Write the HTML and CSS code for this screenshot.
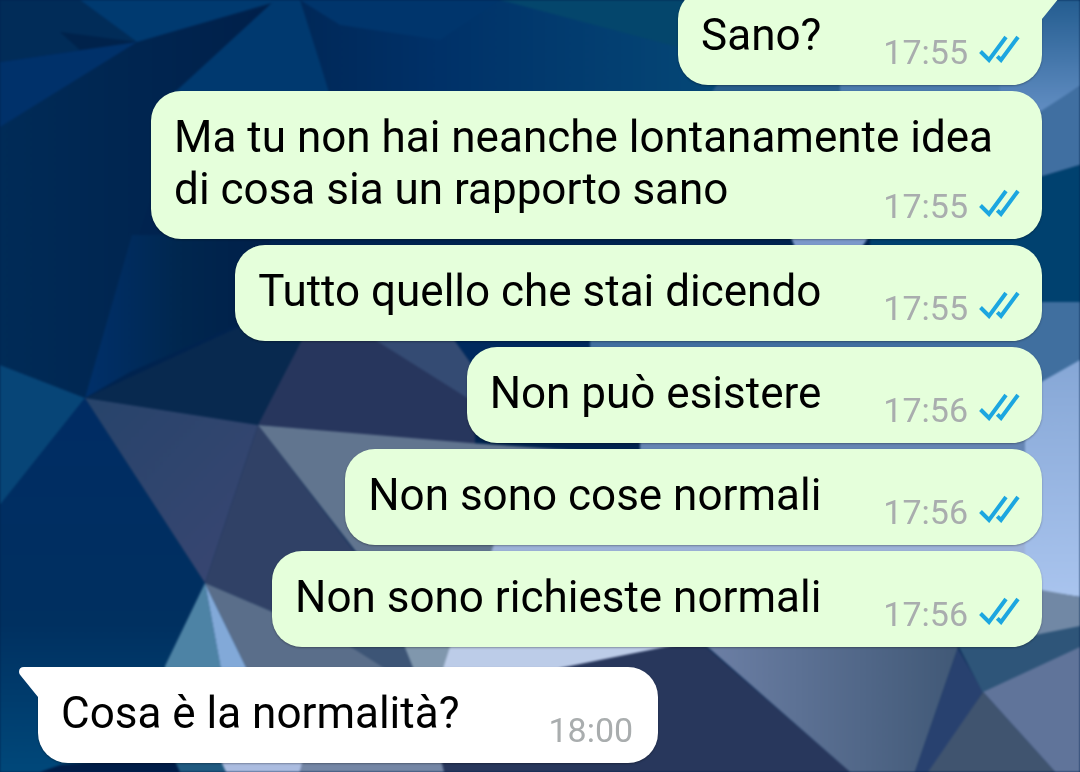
FILE: index.html
```html
<!DOCTYPE html>
<html lang="it">
<head>
  <meta charset="UTF-8">
  <meta name="viewport" content="width=device-width, initial-scale=1.0">
  <title>Chat</title>
  <link rel="stylesheet" href="styles.css">
</head>
<body>
  <!-- low poly wallpaper -->
  <svg class="wallpaper" viewBox="0 0 1080 772" preserveAspectRatio="xMidYMid slice" aria-hidden="true">
    <defs>
      <linearGradient id="top" x1="0" x2="1" y1="0" y2="0">
        <stop offset="0" stop-color="#002858"/>
        <stop offset=".3" stop-color="#003168"/>
        <stop offset="1" stop-color="#064b79"/>
      </linearGradient>
      <linearGradient id="sky" x1="0" x2="0" y1="0" y2="1">
        <stop offset="0" stop-color="#245d90"/>
        <stop offset="1" stop-color="#6691c6"/>
      </linearGradient>
      <linearGradient id="night" x1="0" x2="1" y1="0" y2="0">
        <stop offset="0" stop-color="#002b57"/>
        <stop offset="1" stop-color="#001f49"/>
      </linearGradient>
      <linearGradient id="shade" x1="0" x2="1" y1="0" y2="0">
        <stop offset="0" stop-color="#00306a"/>
        <stop offset=".5" stop-color="#00274f"/>
        <stop offset="1" stop-color="#001f49"/>
      </linearGradient>
      <linearGradient id="deep" x1="0" x2="0" y1="0" y2="1">
        <stop offset="0" stop-color="#002c64"/>
        <stop offset=".6" stop-color="#003060"/>
        <stop offset="1" stop-color="#00487a"/>
      </linearGradient>
      <linearGradient id="slate" x1="0" x2="1" y1="0" y2="1">
        <stop offset="0" stop-color="#27446b"/>
        <stop offset="1" stop-color="#3a4672"/>
      </linearGradient>
      <linearGradient id="grey" x1="0" x2="1" y1="0" y2="0">
        <stop offset="0" stop-color="#6d80a6"/>
        <stop offset="1" stop-color="#405876"/>
      </linearGradient>
      <linearGradient id="ice" x1="0" x2="0" y1="0" y2="1">
        <stop offset="0" stop-color="#86a7d6"/>
        <stop offset="1" stop-color="#a9c4ee"/>
      </linearGradient>
    </defs>
    <rect width="1080" height="772" fill="#00234f"/>
    <polygon points="0,120 137,42 290,0 175,92 160,170 85,398 0,365" fill="url(#night)"/>
    <polygon points="0,0 80,0 137,42 0,62" fill="#012c58"/>
    <polygon points="60,32 137,42 80,50" fill="#00224b"/>
    <polygon points="0,62 137,42 0,127" fill="#00316a"/>
    <polygon points="80,0 282,0 137,42" fill="#003a70"/>
    <polygon points="275,0 302,0 330,95 175,92" fill="#00396f"/>
    <polygon points="300,0 760,0 760,100 330,95" fill="url(#top)"/>
    <polygon points="300,0 500,0 440,40 340,25" fill="#00356c"/>
    <polygon points="500,0 700,0 700,52 670,45" fill="#04466c"/>
    <polygon points="720,80 840,80 840,95 710,95" fill="#285d8b"/>
    <polygon points="840,80 1030,80 1030,95 840,95" fill="#4b7bad"/>
    <polygon points="1000,0 1080,0 1080,86 1030,120 1000,120" fill="url(#sky)"/>
    <polygon points="1080,86 1080,165 1030,180 1030,118" fill="#406fa1"/>
    <polygon points="870,180 1030,180 1080,165 1080,302 870,302" fill="#00416f"/>
    <polygon points="790,235 870,235 860,250 796,250" fill="#7b98ca"/>
    <polygon points="132,235 270,235 270,310 130,372 85,398" fill="url(#shade)"/>
    <polygon points="85,398 258,318 310,335 258,425" fill="#08294f"/>
    <polygon points="0,365 85,398 0,505" fill="#074577"/>
    <polygon points="85,398 205,583 165,666 165,772 0,772 0,505" fill="url(#deep)"/>
    <polygon points="85,398 258,425 205,583" fill="url(#slate)"/>
    <polygon points="258,425 365,565 273,612 205,583" fill="#304166"/>
    <polygon points="303,338 375,338 475,400 475,445 258,425" fill="#27365d"/>
    <polygon points="372,338 453,338 490,390 480,406" fill="#344b73"/>
    <polygon points="453,338 600,338 600,390 490,390" fill="#002a5e"/>
    <polygon points="590,338 1020,338 1020,302 1080,302 1080,362 1030,390 590,390" fill="#406f9f"/>
    <polygon points="1020,394 1080,360 1080,597 1020,588" fill="url(#ice)"/>
    <polygon points="640,438 1025,438 1025,454 640,454" fill="#6585b3"/>
    <polygon points="258,425 470,443 640,455 495,557 360,557" fill="#61758f"/>
    <polygon points="495,540 1025,540 1025,556 490,556" fill="#9db2d8"/>
    <polygon points="1030,588 1080,597 1080,627 1020,640" fill="#7188a5"/>
    <polygon points="205,583 165,666 165,675 222,675" fill="#4d83a5"/>
    <polygon points="205,583 222,675 250,675" fill="#82a9d8"/>
    <polygon points="205,583 273,612 340,640 420,675 250,675" fill="#5a6e8a"/>
    <polygon points="340,640 410,640 420,675 395,675" fill="#3d5576"/>
    <polygon points="402,640 452,640 443,675 416,675" fill="#8097ad"/>
    <polygon points="452,640 700,640 550,675 441,675" fill="#bccce8"/>
    <polygon points="560,668 680,644 705,646 850,772 440,772 440,740" fill="#28375c"/>
    <polygon points="702,642 960,642 915,772 850,772" fill="url(#grey)"/>
    <polygon points="958,648 983,692 930,772 915,772" fill="#28416f"/>
    <polygon points="955,640 1030,636 1080,626 1080,648 983,693" fill="#2e5579"/>
    <polygon points="983,692 1080,647 1080,772 1055,772" fill="#60749a"/>
    <polygon points="983,692 1055,772 928,772" fill="#40546f"/>
    <polygon points="60,765 175,755 180,772 40,772" fill="#001d48"/>
    <polygon points="172,755 220,755 226,772 180,772" fill="#205a80"/>
    <polygon points="218,755 305,755 300,772 226,772" fill="#abbce0"/>
    <polygon points="304,755 440,755 444,772 300,772" fill="#7486a5"/>
  </svg>

  <svg class="defs" aria-hidden="true">
    <symbol id="ticks" viewBox="0 0 41 28">
      <path d="M1.5 16.5 L10 25 L27 2 M18.3 21.3 L22 25 L39 2"/>
    </symbol>
    <symbol id="tail" viewBox="0 0 20 30">
      <path d="M20 0 H5 Q0 0 0 5 Q0 7 2 9 L19 30 H20 Z"/>
    </symbol>
  </svg>

  <main class="chat">
    <div class="bubble out first">
      <svg class="tail"><use href="#tail"/></svg>
      <p>Sano?</p>
      <div class="meta"><time>17:55</time><svg class="ticks"><use href="#ticks"/></svg></div>
    </div>
    <div class="bubble out long">
      <p>Ma tu non hai neanche lontanamente idea<br>di cosa sia un rapporto sano</p>
      <div class="meta"><time>17:55</time><svg class="ticks"><use href="#ticks"/></svg></div>
    </div>
    <div class="bubble out">
      <p>Tutto quello che stai dicendo</p>
      <div class="meta"><time>17:55</time><svg class="ticks"><use href="#ticks"/></svg></div>
    </div>
    <div class="bubble out">
      <p>Non può esistere</p>
      <div class="meta"><time>17:56</time><svg class="ticks"><use href="#ticks"/></svg></div>
    </div>
    <div class="bubble out">
      <p>Non sono cose normali</p>
      <div class="meta"><time>17:56</time><svg class="ticks"><use href="#ticks"/></svg></div>
    </div>
    <div class="bubble out">
      <p>Non sono richieste normali</p>
      <div class="meta"><time>17:56</time><svg class="ticks"><use href="#ticks"/></svg></div>
    </div>
    <div class="bubble in">
      <svg class="tail"><use href="#tail"/></svg>
      <p>Cosa è la normalità?</p>
      <div class="meta"><time>18:00</time></div>
    </div>
  </main>
</body>
</html>
```
FILE: styles.css
```css
* {
  box-sizing: border-box;
}

body {
  margin: 0;
  background: #00234f;
  font-family: Roboto, sans-serif;
  color: #000;
}

.wallpaper {
  position: fixed;
  inset: 0;
  width: 100%;
  height: 100%;
  filter: blur(1px);
}

.defs {
  position: absolute;
  width: 0;
  height: 0;
}

/* newest message stays at the bottom, older ones scroll off the top */
.chat {
  position: relative;
  display: flex;
  flex-direction: column;
  justify-content: flex-end;
  gap: 6px;
  height: 100vh;
  padding: 0 38px 9px;
  overflow: hidden;
}

.bubble {
  position: relative;
  flex-shrink: 0;
  display: flex;
  align-items: flex-end;
  gap: 62px;
  padding: 20px 22px 13px 23px;
  border-radius: 30px;
  box-shadow: 0 1px 2px rgba(0, 0, 0, 0.3);
}

.bubble p {
  margin: 0;
  padding-bottom: 11px;
  font-size: 44px;
  line-height: 52px;
}

.out {
  align-self: flex-end;
  background: #e5ffdb;
}

.first {
  border-top-right-radius: 0;
}

.in {
  align-self: flex-start;
  margin-top: 14px;
  padding-right: 25px;
  gap: 89px;
  background: #fff;
  border-top-left-radius: 0;
}

/* time sits over the end of the last line */
.long {
  display: grid;
}

.long p,
.long .meta {
  grid-area: 1 / 1;
}

.long p {
  padding-right: 27px;
}

.long .meta {
  align-self: end;
  justify-self: end;
}

.meta {
  display: flex;
  align-items: center;
  gap: 11px;
  font-size: 34px;
  line-height: 40px;
  color: #a9adae;
}

.ticks {
  width: 41px;
  height: 28px;
  margin-bottom: 7px;
  fill: none;
  stroke: #1ca6e0;
  stroke-width: 4;
}

.tail {
  position: absolute;
  top: 0;
  left: -19px;
  width: 20px;
  height: 30px;
  fill: #fff;
}

.out .tail {
  left: auto;
  right: -19px;
  fill: #e5ffdb;
  transform: scaleX(-1);
}
```
